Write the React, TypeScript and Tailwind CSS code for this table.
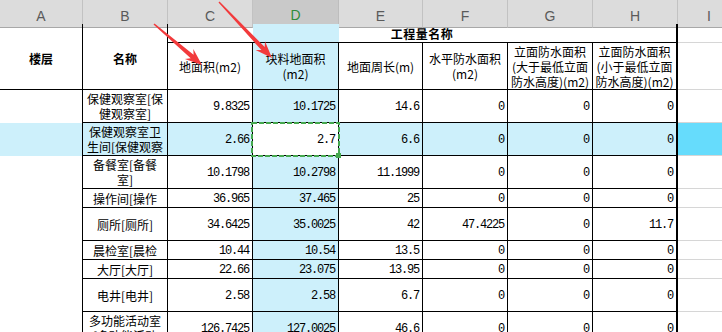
import React from "react";

const COLS = "grid-cols-[83px_85px_85px_86px_84px_85px_85px_85px_44px]";
const ROWS = "grid-rows-[19px_47px_33px_33px_33px_19px_33px_19px_19px_33px_33px]";

const BLUE = "bg-[#cdf0fb]";

type Row = { name: string[]; top?: boolean; vals: string[] };

const rows: Row[] = [
  { name: ["保健观察室[保", "健观察室]"], vals: ["9.8325", "10.1725", "14.6", "0", "0", "0"] },
  { name: ["保健观察室卫", "生间[保健观察"], vals: ["2.66", "2.7", "6.6", "0", "0", "0"] },
  { name: ["备餐室[备餐", "室]"], vals: ["10.1798", "10.2798", "11.1999", "0", "0", "0"] },
  { name: ["操作间[操作", "间]"], top: true, vals: ["36.965", "37.465", "25", "0", "0", "0"] },
  { name: ["厕所[厕所]"], vals: ["34.6425", "35.0025", "42", "47.4225", "0", "11.7"] },
  { name: ["晨检室[晨检", "室]"], top: true, vals: ["10.44", "10.54", "13.5", "0", "0", "0"] },
  { name: ["大厅[大厅]"], vals: ["22.66", "23.075", "13.95", "0", "0", "0"] },
  { name: ["电井[电井]"], vals: ["2.58", "2.58", "6.7", "0", "0", "0"] },
  { name: ["多功能活动室", "[多功能活动"], vals: ["126.7425", "127.0025", "46.6", "0", "0", "0"] },
];

const heads: string[][] = [
  ["地面积(m2)"],
  ["块料地面积", "(m2)"],
  ["地面周长(m)"],
  ["水平防水面积", "(m2)"],
  ["立面防水面积", "(大于最低立面", "防水高度)(m2)"],
  ["立面防水面积", "(小于最低立面", "防水高度)(m2)"],
];

const SEL = 1;

function arrow(x1: number, y1: number, x2: number, y2: number) {
  const tw = 1.4, sw = 4.5, hw = 13, hl = 17;
  const dx = x2 - x1, dy = y2 - y1;
  const len = Math.hypot(dx, dy);
  const ux = dx / len, uy = dy / len;
  const nx = -uy, ny = ux;
  const bx = x2 - ux * hl, by = y2 - uy * hl;
  const kx = x2 - ux * (hl - 4), ky = y2 - uy * (hl - 4);
  const p = (x: number, y: number) => `${x.toFixed(1)},${y.toFixed(1)}`;
  return [
    p(x1 + (nx * tw) / 2, y1 + (ny * tw) / 2),
    p(kx + (nx * sw) / 2, ky + (ny * sw) / 2),
    p(bx + (nx * hw) / 2, by + (ny * hw) / 2),
    p(x2, y2),
    p(bx - (nx * hw) / 2, by - (ny * hw) / 2),
    p(kx - (nx * sw) / 2, ky - (ny * sw) / 2),
    p(x1 - (nx * tw) / 2, y1 - (ny * tw) / 2),
  ].join(" ");
}

function Lines({ lines }: { lines: string[] }) {
  return (
    <>
      {lines.map((l, i) => (
        <span key={i} className="whitespace-nowrap">
          {l}
        </span>
      ))}
    </>
  );
}

function ColumnHeader() {
  const letters = ["A", "B", "C", "D", "E", "F", "G", "H", "I"];
  return (
    <div className={`grid ${COLS} h-[24px] font-['Liberation_Sans',sans-serif] text-[14px]`}>
      {letters.map((l) =>
        l === "D" ? (
          <div
            key={l}
            className="flex items-center justify-center pt-[5px] bg-[#c9c9c9] border-r border-r-[#bdbdbd] border-b-2 border-b-[#3f9f49] text-[#2f8c3b]"
          >
            {l}
          </div>
        ) : (
          <div
            key={l}
            className={`flex items-center pt-[6px] bg-[#dcdcdc] border-b border-b-[#a8a8a8] text-[#5a5a5a] ${
              l === "I" ? "justify-start pl-[29px]" : "justify-center border-r border-r-[#c2c2c2]"
            }`}
          >
            {l}
          </div>
        )
      )}
    </div>
  );
}

export default function App() {
  return (
    <div className="relative w-[722px] h-[332px] overflow-hidden bg-white">
      <ColumnHeader />

      <div className={`grid ${COLS} ${ROWS} text-[12px] text-black font-['Noto_Sans_CJK_SC',sans-serif] leading-[15px]`}>
        {/* header rows */}
        <div className="row-span-2 flex items-center justify-center pt-[3px] border-r border-b border-black font-bold">
          楼层
        </div>
        <div className="row-span-2 flex items-center justify-center pt-[3px] border-r border-b border-black font-bold">
          名称
        </div>
        <div className="col-span-6 flex items-center justify-center border-r-2 border-b border-black font-bold tracking-[0.5px] bg-[linear-gradient(to_right,transparent_85px,#cdf0fb_85px,#cdf0fb_171px,transparent_171px)]">
          工程量名称
        </div>
        <div className="border-b border-[#d6d6d6]" />

        {heads.map((h, j) => (
          <div
            key={j}
            className={`flex flex-col items-center justify-center overflow-hidden border-b border-black ${
              j === 5 ? "border-r-2" : "border-r"
            } ${j === 1 ? BLUE : ""}`}
          >
            <Lines lines={h} />
          </div>
        ))}
        <div className="border-b border-[#d6d6d6]" />

        {/* data rows */}
        {rows.map((r, i) => {
          const sel = i === SEL;
          return (
            <React.Fragment key={i}>
              <div className={`border-r border-black ${sel ? BLUE : ""}`} />
              <div
                className={`flex flex-col items-center overflow-hidden border-r border-b border-black ${
                  r.top ? "justify-start pt-[2px]" : "justify-center"
                } ${sel ? BLUE : ""}`}
              >
                <Lines lines={r.name} />
              </div>
              {r.vals.map((v, j) => {
                const cur = sel && j === 1;
                const bg = cur ? "bg-white" : sel || j === 1 ? BLUE : "";
                return (
                  <div
                    key={j}
                    className={`flex items-center justify-end pr-[3px] pt-[2px] border-b border-black font-['Liberation_Mono',monospace] tracking-[-1.2px] ${
                      j === 5 ? "border-r-2" : "border-r"
                    } ${bg} ${cur ? "relative" : ""}`}
                  >
                    {v}
                    {cur && (
                      <svg className="absolute -left-[2px] -top-[1px] z-10" width={90} height={36}>
                        <rect
                          x={1}
                          y={1}
                          width={87}
                          height={33}
                          fill="none"
                          stroke="#46a84f"
                          strokeWidth={2}
                          strokeDasharray="5 2"
                        />
                        <rect x={85} y={31} width={5} height={5} fill="#46a84f" />
                      </svg>
                    )}
                  </div>
                );
              })}
              <div className={`border-b border-[#d6d6d6] ${sel ? "bg-[#66dcfc]" : ""}`} />
            </React.Fragment>
          );
        })}
      </div>

      {/* annotation arrows */}
      <svg className="absolute inset-0 z-20 pointer-events-none" width={722} height={332}>
        <polygon points={arrow(154, 24, 202, 65)} fill="#f23a3c" />
        <polygon points={arrow(219, 2, 272, 58)} fill="#f23a3c" />
      </svg>
    </div>
  );
}
